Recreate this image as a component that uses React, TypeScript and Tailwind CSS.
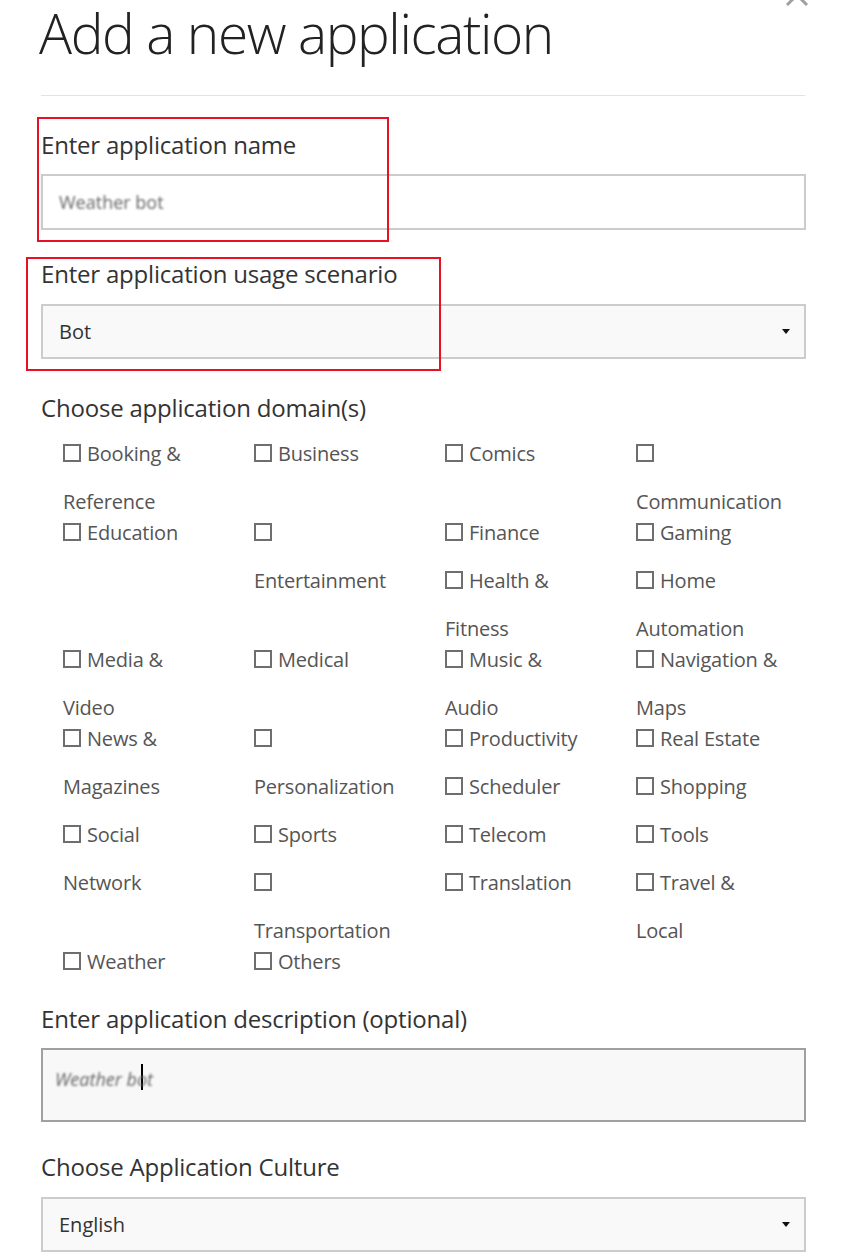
import React from "react";

type Item = { a: string; b?: string };

const items: Item[] = [
  { a: "Booking &", b: "Reference" },
  { a: "Business" },
  { a: "Comics" },
  { a: "", b: "Communication" },
  { a: "Education" },
  { a: "", b: "Entertainment" },
  { a: "Finance" },
  { a: "Gaming" },
  { a: "Health &", b: "Fitness" },
  { a: "Home", b: "Automation" },
  { a: "Media &", b: "Video" },
  { a: "Medical" },
  { a: "Music &", b: "Audio" },
  { a: "Navigation &", b: "Maps" },
  { a: "News &", b: "Magazines" },
  { a: "", b: "Personalization" },
  { a: "Productivity" },
  { a: "Real Estate" },
  { a: "Scheduler" },
  { a: "Shopping" },
  { a: "Social", b: "Network" },
  { a: "Sports" },
  { a: "Telecom" },
  { a: "Tools" },
  { a: "", b: "Transportation" },
  { a: "Translation" },
  { a: "Travel &", b: "Local" },
  { a: "Weather" },
  { a: "Others" },
];

function Caret() {
  return (
    <svg width="8" height="5" viewBox="0 0 8 5" className="shrink-0">
      <path d="M0 0 H8 L4 5 Z" fill="#111" />
    </svg>
  );
}

function Label({ children }: { children: React.ReactNode }) {
  return <div className="h-[32px] leading-[32px] text-[24px] text-[#333] tracking-[-0.2px]">{children}</div>;
}

export default function App() {
  return (
    <div
      className="relative w-[847px] h-[1260px] overflow-hidden bg-white"
      style={{ fontFamily: '"Open Sans", "Noto Sans", sans-serif' }}
    >
      {/* close icon */}
      <svg width="26" height="26" viewBox="0 0 26 26" className="absolute left-[784px] top-[-18px]">
        <path d="M3 3 L23 23 M23 3 L3 23" stroke="#a0a0a0" strokeWidth="3" />
      </svg>

      {/* annotation boxes */}
      <div className="absolute left-[37px] top-[117px] w-[352px] h-[125px] border-2 border-[#e81123]" />
      <div className="absolute left-[26px] top-[257px] w-[415px] h-[114px] border-2 border-[#e81123]" />

      <div className="px-[41px]">
        <div className="h-[95px] pt-[3px]">
          <h1 className="text-[55px] leading-[60px] font-light text-[#222] tracking-[-1.4px] ml-[-2px]">Add a new application</h1>
        </div>
        <div className="w-[764px] border-t border-[#e3e3e3]" />

        <div className="pt-[33px]">
          <Label>Enter application name</Label>
          <div className="mt-[13px] h-[56px] border-2 border-[#cccccc] bg-white flex items-center pl-[16px]">
            <span className="text-[18px] text-[#666] blur-[1px]">Weather bot</span>
          </div>
        </div>

        <div className="pt-[28px]">
          <Label>Enter application usage scenario</Label>
          <div className="mt-[14px] h-[55px] border-2 border-[#cccccc] bg-[#f9f9f9] flex items-center justify-between pl-[16px] pr-[14px]">
            <span className="text-[20px] text-[#333]">Bot</span>
            <Caret />
          </div>
        </div>

        <div className="pt-[33px]">
          <Label>Choose application domain(s)</Label>
        </div>

        <div className="flow-root w-[764px] mt-[13.5px] text-[20px] text-[#555] tracking-[-0.2px]">
          {items.map((it, i) => (
            <div key={i} className="float-left w-[191px] pl-[22px]">
              <div className="h-[48px] flex items-start">
                <span className="mt-[6px] w-[18px] h-[18px] border-2 border-[#6e6e6e] shrink-0" />
                {it.a && <span className="ml-[6px] leading-[31px] whitespace-nowrap">{it.a}</span>}
              </div>
              {it.b && <div className="h-[31px] leading-[31px] whitespace-nowrap">{it.b}</div>}
            </div>
          ))}
        </div>

        <div className="pt-[9.5px]">
          <Label>Enter application description (optional)</Label>
          <div className="mt-[13px] h-[74px] border-2 border-[#a0a0a0] bg-[#f8f8f8] flex items-start pl-[12px] pt-[16px]">
            <span className="text-[18px] italic text-[#666] blur-[1px]">Weather bot</span>
            <span className="ml-[-12px] mt-[-2px] w-[2px] h-[26px] bg-black" />
          </div>
        </div>

        <div className="pt-[29px]">
          <Label>Choose Application Culture</Label>
          <div className="mt-[14px] h-[55px] border-2 border-[#cccccc] bg-[#f9f9f9] flex items-center justify-between pl-[16px] pr-[14px]">
            <span className="text-[20px] text-[#333]">English</span>
            <Caret />
          </div>
        </div>
      </div>
    </div>
  );
}
